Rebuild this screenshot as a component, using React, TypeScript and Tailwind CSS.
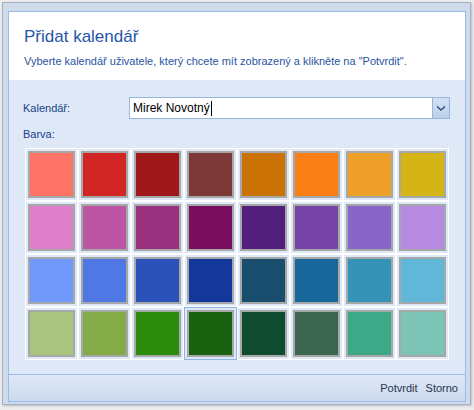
const swatches = [
  ["#ff7466", "#d12424", "#9f191a", "#7d3838", "#cb7206", "#fa8016", "#eea02b", "#d5b515"],
  ["#e07fc9", "#bc55a4", "#9a317e", "#790e5f", "#52207c", "#7843a6", "#8866c9", "#b78ae2"],
  ["#7199fb", "#4f78e5", "#2a52b8", "#13379a", "#1a4e6f", "#17679c", "#3493b6", "#61b7d8"],
  ["#a9c47f", "#84ab47", "#2e8c0c", "#1a6210", "#0f4b2f", "#3a654f", "#3da986", "#7cc4b5"],
];

const font = { fontFamily: '"Liberation Sans", Arial, sans-serif' };

function ColorGrid({ selected }: { selected: number }) {
  return (
    <div className="ml-[16px] w-[424px] bg-white p-[1px] grid grid-cols-8 gap-[2px]">
      {swatches.flat().map((color, i) => (
        <div
          key={i}
          className={
            i === selected
              ? "w-[51px] h-[51px] bg-[#dfe8f6] p-[2px] ring-1 ring-[#8db3e6]"
              : "w-[51px] h-[51px] bg-[#dfe8f6] p-[2px]"
          }
        >
          <div
            className="w-full h-full border-2 border-[#a6a8a8]"
            style={{ backgroundColor: color }}
          />
        </div>
      ))}
    </div>
  );
}

export default function App() {
  return (
    <div className="w-[474px] h-[410px] bg-[#ececec] pt-[2px] pl-[2px]" style={font}>
      <div className="w-[469px] h-[403px] border border-[#a3afc2] bg-[#cfdbeb] pt-[8px] pl-[5px] pr-[4px] pb-[2px] flex flex-col shadow-[1px_1px_2px_rgba(0,0,0,0.2)]">
        <div className="flex-1 border border-[#99bbe8] flex flex-col">
          <div className="h-[68px] bg-white px-[15px] pt-[14px]">
            <div className="text-[17px] leading-[21px] text-[#2556a6]">Přidat kalendář</div>
            <div className="mt-[8px] text-[11px] leading-[13px] text-[#2b53a0]">
              Vyberte kalendář uživatele, který chcete mít zobrazený a klikněte na "Potvrdit".
            </div>
          </div>

          <div className="flex-1 bg-[#dfe8f6] pt-[17px]">
            <div className="flex items-center pl-[14px] h-[22px]">
              <div className="w-[106px] text-[11px] text-[#15428b]">Kalendář:</div>
              <div className="w-[321px] h-[22px] border border-[#98b6dc] bg-white flex">
                <div className="flex-1 flex items-center pl-[3px] text-[12px] text-black">
                  Mirek Novotný
                  <span className="w-[1px] h-[15px] bg-black ml-[1px]" />
                </div>
                <div className="w-[17px] h-full border-l border-[#98b6dc] bg-gradient-to-b from-[#d3e1f3] to-[#bdd0ea] flex items-center justify-center">
                  <svg width="8" height="6" viewBox="0 0 8 6">
                    <path d="M0 0.5 L4 4 L8 0.5 L8 2.5 L4 6 L0 2.5 Z" fill="#34528a" />
                  </svg>
                </div>
              </div>
            </div>

            <div className="mt-[9px] pl-[14px] text-[11px] leading-[13px] text-[#15428b]">Barva:</div>

            <div className="mt-[7px]">
              <ColorGrid selected={27} />
            </div>
          </div>

          <div className="h-[27px] border-t border-[#99bbe8] bg-gradient-to-b from-[#dfe8f6] to-[#cbdaee] flex items-center justify-end gap-[8px] pr-[7px] text-[11px] text-[#27364d]">
            <span>Potvrdit</span>
            <span>Storno</span>
          </div>
        </div>
      </div>
    </div>
  );
}
